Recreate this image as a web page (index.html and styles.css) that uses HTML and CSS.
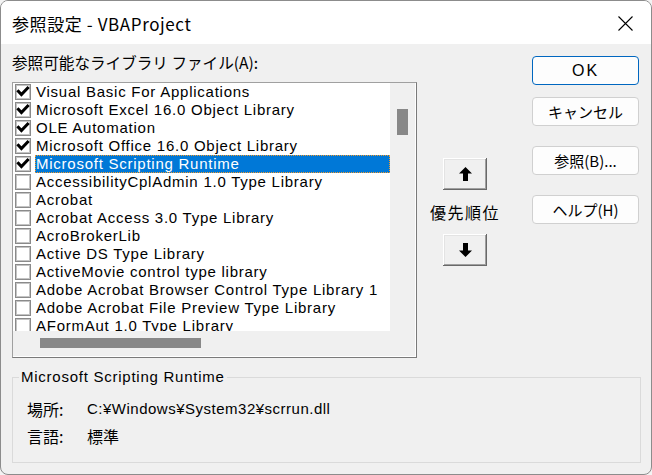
FILE: index.html
```html
<!DOCTYPE html>
<html lang="ja">
    <head>
        <meta charset="utf-8">
        <title>参照設定 - VBAProject</title>
        <link rel="stylesheet" href="styles.css">
    </head>
    <body>
        <div class="window">
            <div class="titlebar">
                <span class="title">参照設定 - VBAProject</span>
                <svg class="close" width="15" height="15" viewBox="0 0 15 15">
                    <path d="M0.5 0.5 L14.5 14.5 M14.5 0.5 L0.5 14.5" stroke="#000" stroke-width="1.1" fill="none"/>
                </svg>
            </div>

            <div class="content">
                <div class="main">
                    <div class="refs">
                        <div class="caption">参照可能なライブラリ ファイル(A):</div>
                        <div class="listbox">
                            <ul class="items">
                                <li class="item"><span class="check on"><svg viewBox="0 0 14 14"><path d="M2.4 6.4 L5.4 9.6 L11.6 3"/></svg></span><span class="name">Visual Basic For Applications</span></li>
                                <li class="item"><span class="check on"><svg viewBox="0 0 14 14"><path d="M2.4 6.4 L5.4 9.6 L11.6 3"/></svg></span><span class="name">Microsoft Excel 16.0 Object Library</span></li>
                                <li class="item"><span class="check on"><svg viewBox="0 0 14 14"><path d="M2.4 6.4 L5.4 9.6 L11.6 3"/></svg></span><span class="name">OLE Automation</span></li>
                                <li class="item"><span class="check on"><svg viewBox="0 0 14 14"><path d="M2.4 6.4 L5.4 9.6 L11.6 3"/></svg></span><span class="name">Microsoft Office 16.0 Object Library</span></li>
                                <li class="item selected"><span class="check on"><svg viewBox="0 0 14 14"><path d="M2.4 6.4 L5.4 9.6 L11.6 3"/></svg></span><span class="name">Microsoft Scripting Runtime</span></li>
                                <li class="item"><span class="check"></span><span class="name">AccessibilityCplAdmin 1.0 Type Library</span></li>
                                <li class="item"><span class="check"></span><span class="name">Acrobat</span></li>
                                <li class="item"><span class="check"></span><span class="name">Acrobat Access 3.0 Type Library</span></li>
                                <li class="item"><span class="check"></span><span class="name">AcroBrokerLib</span></li>
                                <li class="item"><span class="check"></span><span class="name">Active DS Type Library</span></li>
                                <li class="item"><span class="check"></span><span class="name">ActiveMovie control type library</span></li>
                                <li class="item"><span class="check"></span><span class="name">Adobe Acrobat Browser Control Type Library 1</span></li>
                                <li class="item"><span class="check"></span><span class="name">Adobe Acrobat File Preview Type Library</span></li>
                                <li class="item"><span class="check"></span><span class="name">AFormAut 1.0 Type Library</span></li>
                            </ul>
                            <div class="vscroll"><div class="vthumb"></div></div>
                            <div class="hscroll"><div class="hthumb"></div></div>
                            <div class="corner"></div>
                        </div>
                    </div>

                    <div class="priority">
                        <button class="arrow">
                            <svg width="13" height="14" viewBox="0 0 13 14"><polygon points="6.5,0 13,6.5 9,6.5 9,14 4,14 4,6.5 0,6.5"/></svg>
                        </button>
                        <div class="priority-label">優先順位</div>
                        <button class="arrow">
                            <svg width="13" height="14" viewBox="0 0 13 14"><polygon points="6.5,14 13,7.5 9,7.5 9,0 4,0 4,7.5 0,7.5"/></svg>
                        </button>
                    </div>

                    <div class="actions">
                        <button class="btn default">OK</button>
                        <button class="btn">キャンセル</button>
                        <button class="btn spaced">参照(B)...</button>
                        <button class="btn spaced">ヘルプ(H)</button>
                    </div>
                </div>

                <fieldset class="details">
                    <legend>Microsoft Scripting Runtime</legend>
                    <div class="row"><span class="key">場所:</span><span class="val latin">C:¥Windows¥System32¥scrrun.dll</span></div>
                    <div class="row"><span class="key">言語:</span><span class="val">標準</span></div>
                </fieldset>
            </div>
        </div>
    </body>
</html>
```

FILE: styles.css
```css
* {
    margin: 0;
    padding: 0;
    box-sizing: border-box;
}

html, body {
    width: 652px;
    height: 475px;
    overflow: hidden;
    background: #f3f3f3;
    font-family: "Noto Sans CJK JP", sans-serif;
    color: #000;
}

.window {
    width: 652px;
    height: 475px;
    border: 1px solid #8c8c8c;
    border-radius: 8px;
    overflow: hidden;
    background: #f0f0f0;
    display: flex;
    flex-direction: column;
}

.titlebar {
    height: 43px;
    flex: none;
    background: #fff;
    display: flex;
    align-items: center;
    justify-content: space-between;
    padding: 2px 18px 0 11px;
}
.title {
    font-size: 17px;
    letter-spacing: 0.6px;
}

.content {
    padding: 9px 10px 0 11px;
}

.main {
    display: flex;
}

/* reference list */
.refs {
    width: 405px;
}
.caption {
    font-size: 15.6px;
    line-height: 18px;
    height: 18px;
    margin-bottom: 11px;
    white-space: nowrap;
}

.listbox {
    display: grid;
    grid-template-columns: 377px 25px;
    grid-template-rows: 248px 25px;
    border: 1px solid;
    border-color: #a0a0a0 #7a7a7a #7a7a7a #a0a0a0;
    padding: 0 1px 1px 0;
    background: #fff;
}
.items {
    list-style: none;
    overflow: hidden;
    padding-left: 2px;
    background: #fff;
    font-family: "Liberation Sans", Arial, sans-serif;
    font-size: 15px;
    letter-spacing: 0.75px;
}
.item {
    height: 18px;
    display: flex;
    align-items: center;
    white-space: nowrap;
}
.check {
    width: 16px;
    height: 16px;
    flex: none;
    border: 1px solid #8a8a8a;
    box-shadow: inset 0 0 0 1px #c4c4c4;
    background: #fff;
    margin-right: 4px;
}
.check svg {
    display: block;
    width: 14px;
    height: 14px;
    fill: none;
    stroke: #000;
    stroke-width: 3;
    stroke-linecap: square;
}
.name {
    flex: 1;
    height: 18px;
    line-height: 18px;
    padding-left: 1px;
    overflow: hidden;
}
.selected .name {
    background: #0078d7;
    color: #fff;
    outline: 1px dotted #f39a2c;
    outline-offset: -1px;
}

.vscroll, .hscroll, .corner {
    background: #f0f0f0;
}
.vscroll {
    padding: 26px 0 0 7px;
}
.vthumb {
    width: 11px;
    height: 26px;
    background: #888;
}
.hscroll {
    padding: 7px 0 0 27px;
}
.hthumb {
    width: 161px;
    height: 10px;
    background: #888;
}

/* priority arrows */
.priority {
    width: 96px;
    display: flex;
    flex-direction: column;
    align-items: center;
    padding-top: 105px;
}
.arrow {
    width: 44px;
    height: 32px;
    background: #f0f0f0;
    border: none;
    box-shadow: inset -1px -1px 0 #696969, inset 1px 1px 0 #fff, inset -2px -2px 0 #a0a0a0, inset 2px 2px 0 #e3e3e3;
    display: flex;
    align-items: center;
    justify-content: center;
}
.arrow svg {
    fill: #000;
}
.priority-label {
    height: 44px;
    line-height: 44px;
    font-size: 16px;
    letter-spacing: 1.5px;
    white-space: nowrap;
}

/* buttons */
.actions {
    margin-left: 19px;
    width: 107px;
    padding-top: 3px;
    display: flex;
    flex-direction: column;
}
.btn {
    height: 29px;
    background: #fdfdfd;
    border: 1px solid #d0d0d0;
    border-radius: 4px;
    font-family: "Noto Sans CJK JP", sans-serif;
    font-size: 15px;
    font-weight: normal;
    color: #000;
    margin-bottom: 12px;
}
.btn.default {
    border-color: #0067c0;
    font-family: "Liberation Sans", Arial, sans-serif;
    font-size: 16px;
    letter-spacing: 2px;
}
.btn.spaced {
    margin-top: 8px;
}

/* details group */
.details {
    margin-top: 10px;
    width: 629px;
    height: 95px;
    border: 1px solid #dadada;
    padding: 9px 0 0 0;
}
.details legend {
    margin-left: 6px;
    padding: 0 2px;
    line-height: 18px;
    font-family: "Liberation Sans", Arial, sans-serif;
    font-size: 15px;
    letter-spacing: 0.75px;
}
.row {
    height: 27px;
    display: flex;
    align-items: center;
    padding-left: 14px;
}
.key {
    width: 60px;
    font-size: 16px;
}
.val {
    font-size: 16px;
}
.val.latin {
    font-family: "Liberation Sans", Arial, sans-serif;
    font-size: 15px;
    letter-spacing: 0.5px;
}
```
